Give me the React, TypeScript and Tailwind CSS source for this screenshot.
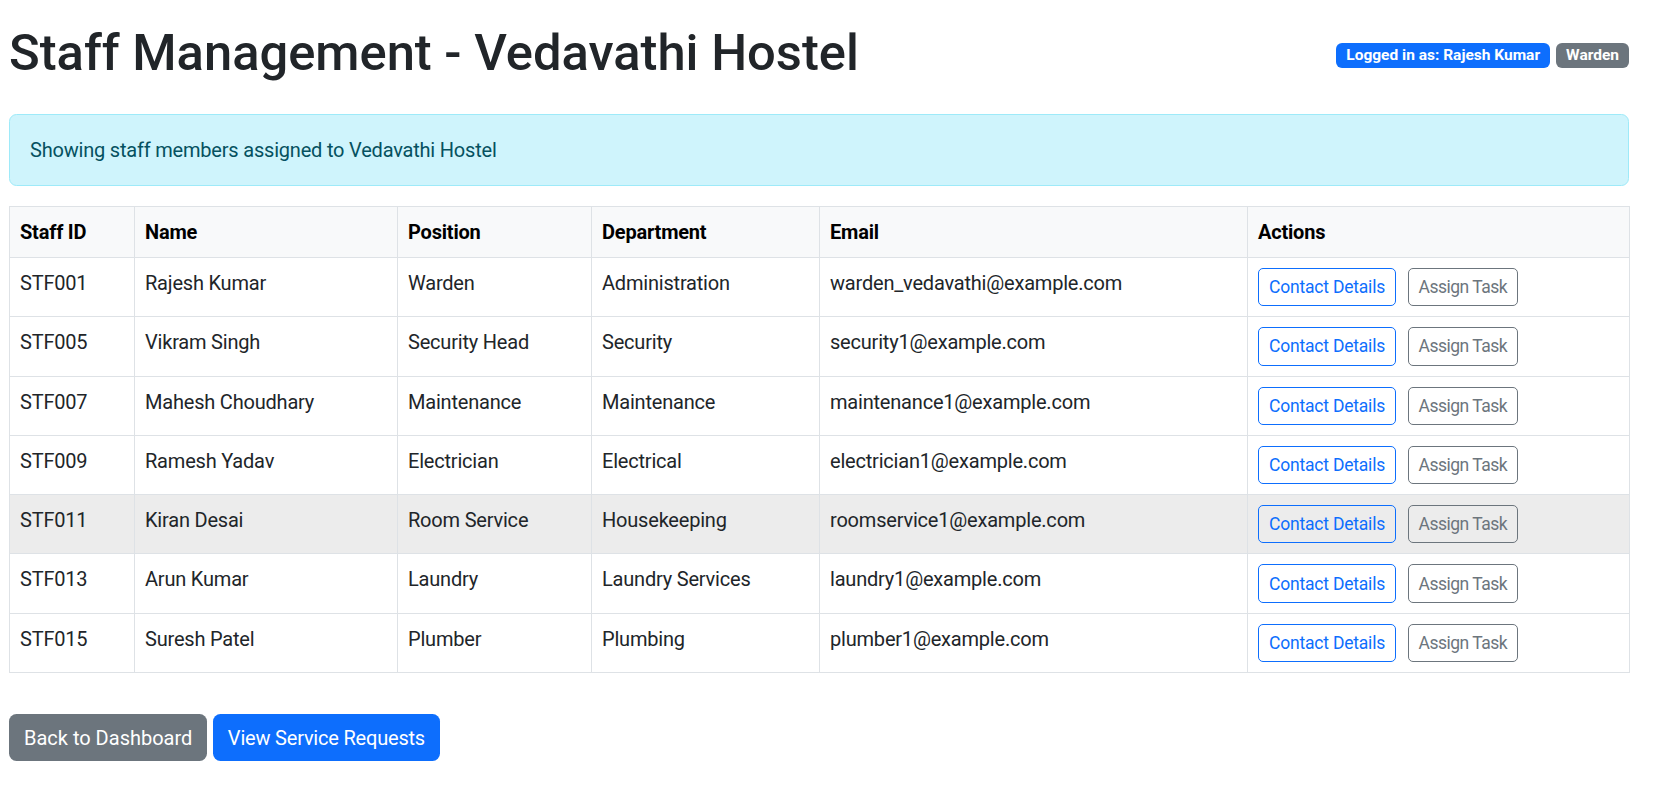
const staff = [
  { id: "STF001", name: "Rajesh Kumar", position: "Warden", department: "Administration", email: "warden_vedavathi@example.com" },
  { id: "STF005", name: "Vikram Singh", position: "Security Head", department: "Security", email: "security1@example.com" },
  { id: "STF007", name: "Mahesh Choudhary", position: "Maintenance", department: "Maintenance", email: "maintenance1@example.com" },
  { id: "STF009", name: "Ramesh Yadav", position: "Electrician", department: "Electrical", email: "electrician1@example.com" },
  { id: "STF011", name: "Kiran Desai", position: "Room Service", department: "Housekeeping", email: "roomservice1@example.com" },
  { id: "STF013", name: "Arun Kumar", position: "Laundry", department: "Laundry Services", email: "laundry1@example.com" },
  { id: "STF015", name: "Suresh Patel", position: "Plumber", department: "Plumbing", email: "plumber1@example.com" },
];

const columns = [
  { label: "Staff ID", width: "w-[125px]" },
  { label: "Name", width: "w-[263px]" },
  { label: "Position", width: "w-[194px]" },
  { label: "Department", width: "w-[228px]" },
  { label: "Email", width: "w-[428px]" },
  { label: "Actions", width: "w-[382px]" },
];

const cell = "border border-[#dee2e6] px-[10px] py-[10px] align-top leading-[30px]";

export default function App() {
  return (
    <div className="min-h-screen bg-white font-['Roboto',sans-serif] text-[20px] tracking-[-0.2px] text-[#212529]">
      <div className="ml-[9px] w-[1620px]">
        <header className="mt-[23px] mb-[31px] flex items-start justify-between">
          <h1 className="text-[50.7px] font-medium leading-[60px] tracking-normal">
            Staff Management - Vedavathi Hostel
          </h1>
          <div className="mt-[20px] flex gap-[6px]">
            <span className="inline-flex h-[25px] items-center rounded-[6px] bg-[#0d6efd] px-[10px] text-[15.5px] font-bold leading-none tracking-normal text-white">
              Logged in as: Rajesh Kumar
            </span>
            <span className="inline-flex h-[25px] items-center rounded-[6px] bg-[#6c757d] px-[10px] text-[15.5px] font-bold leading-none tracking-normal text-white">
              Warden
            </span>
          </div>
        </header>

        <div className="mb-[20px] rounded-[7.5px] border border-[#9eeaf9] bg-[#cff4fc] px-[20px] py-[20px] leading-[30px] text-[#055160]">
          Showing staff members assigned to Vedavathi Hostel
        </div>

        <table className="w-[1620px] table-fixed border-collapse">
          <thead>
            <tr className="bg-[#f8f9fa]">
              {columns.map((col) => (
                <th key={col.label} className={`${cell} ${col.width} text-left font-bold text-black`}>
                  {col.label}
                </th>
              ))}
            </tr>
          </thead>
          <tbody>
            {staff.map((s) => (
              <tr key={s.id} className={s.id === "STF011" ? "bg-[#ececec]" : "bg-white"}>
                <td className={cell}>{s.id}</td>
                <td className={cell}>{s.name}</td>
                <td className={cell}>{s.position}</td>
                <td className={cell}>{s.department}</td>
                <td className={cell}>{s.email}</td>
                <td className={cell}>
                  <div className="flex gap-[11.5px]">
                    <button
                      type="button"
                      className="inline-flex h-[38.3px] items-center rounded-[5px] border border-[#0d6efd] px-[10px] text-[17.5px] text-[#0d6efd]"
                    >
                      Contact Details
                    </button>
                    <button
                      type="button"
                      className="inline-flex h-[38.3px] items-center rounded-[5px] border border-[#6c757d] px-[10px] text-[17.5px] tracking-[-0.5px] text-[#6c757d]"
                    >
                      Assign Task
                    </button>
                  </div>
                </td>
              </tr>
            ))}
          </tbody>
        </table>

        <div className="mt-[41px] flex gap-[5.5px]">
          <button
            type="button"
            className="inline-flex h-[47px] items-center rounded-[7.5px] bg-[#6c757d] px-[15px] leading-[30px] tracking-normal text-white"
          >
            Back to Dashboard
          </button>
          <button
            type="button"
            className="inline-flex h-[47px] items-center rounded-[7.5px] bg-[#0d6efd] px-[15px] leading-[30px] tracking-[-0.2px] text-white"
          >
            View Service Requests
          </button>
        </div>
      </div>
    </div>
  );
}
